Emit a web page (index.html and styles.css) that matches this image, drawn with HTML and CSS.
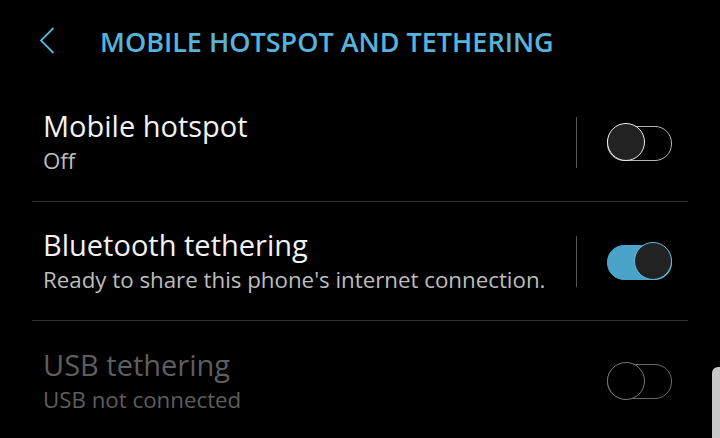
FILE: index.html
```html
<!DOCTYPE html>
<html>
<head>
<meta charset="utf-8">
<link rel="stylesheet" href="styles.css">
</head>
<body>
<div class="screen">
  <header class="header">
    <svg class="back" width="16" height="28" viewBox="0 0 16 28">
      <path d="M14.5 1 L2 13.5 L14.5 26" fill="none" stroke="#56b4dc" stroke-width="1.8"/>
    </svg>
    <h1 class="title">MOBILE HOTSPOT AND TETHERING</h1>
  </header>
  <ul class="list">
    <li class="row">
      <div class="text">
        <div class="name">Mobile hotspot</div>
        <div class="sub">Off</div>
      </div>
      <div class="vdiv"></div>
      <div class="switch off"><span class="thumb"></span></div>
    </li>
    <li class="row">
      <div class="text">
        <div class="name">Bluetooth tethering</div>
        <div class="sub">Ready to share this phone's internet connection.</div>
      </div>
      <div class="vdiv"></div>
      <div class="switch on"><span class="thumb"></span></div>
    </li>
    <li class="row disabled">
      <div class="text">
        <div class="name">USB tethering</div>
        <div class="sub">USB not connected</div>
      </div>
      <div class="switch dis"><span class="thumb"></span></div>
    </li>
  </ul>
  <div class="scrollbar"></div>
</div>
</body>
</html>
```

FILE: styles.css
```css
* { box-sizing: border-box; }
html, body { margin: 0; padding: 0; background: #000; }
body { width: 720px; height: 438px; overflow: hidden; font-family: "Open Sans", "Noto Sans", sans-serif; }
.screen { position: relative; width: 720px; height: 438px; }
.header { height: 83px; display: flex; align-items: center; padding-left: 39px; }
.back { display: block; margin-top: -1px; }
.title { margin: 0 0 0 45px; font-size: 27px; font-weight: 600; color: #56b4dc; letter-spacing: 0; line-height: 1; }
.list { list-style: none; margin: 0 32px; padding: 0; }
.row { height: 119px; display: flex; align-items: center; padding-left: 11px; padding-right: 16px; border-bottom: 1px solid #333; }
.row:last-child { border-bottom: none; }
.text { flex: 1; }
.name { font-size: 29px; color: #f2f2f2; line-height: 37px; }
.sub { font-size: 22.3px; color: #bdbdbd; line-height: 33px; }
.disabled .name, .disabled .sub { color: #5e5e5e; }
.vdiv { width: 1px; height: 51px; background: #555; margin-right: 30px; }
.switch { position: relative; width: 65px; height: 38px; }
.switch::before { content: ""; position: absolute; left: 0; right: 0; top: 2.5px; height: 33px; border-radius: 17px; border: 1.5px solid #b5b5b5; }
.thumb { position: absolute; top: 0; width: 38px; height: 38px; border-radius: 50%; background: #222; border: 1.5px solid #eee; }
.off .thumb { left: 0; }
.on::before { background: #4aa3c8; border-color: #4aa3c8; }
.on .thumb { right: 0; border-color: #62bde0; background: #222; }
.dis::before { border-color: #6a6a6a; }
.dis .thumb { left: 0; background: #000; border-color: #777; }
.scrollbar { position: absolute; left: 712px; top: 367px; width: 10px; height: 80px; background: #c8c8c8; border-radius: 6px 0 0 0; }
```
